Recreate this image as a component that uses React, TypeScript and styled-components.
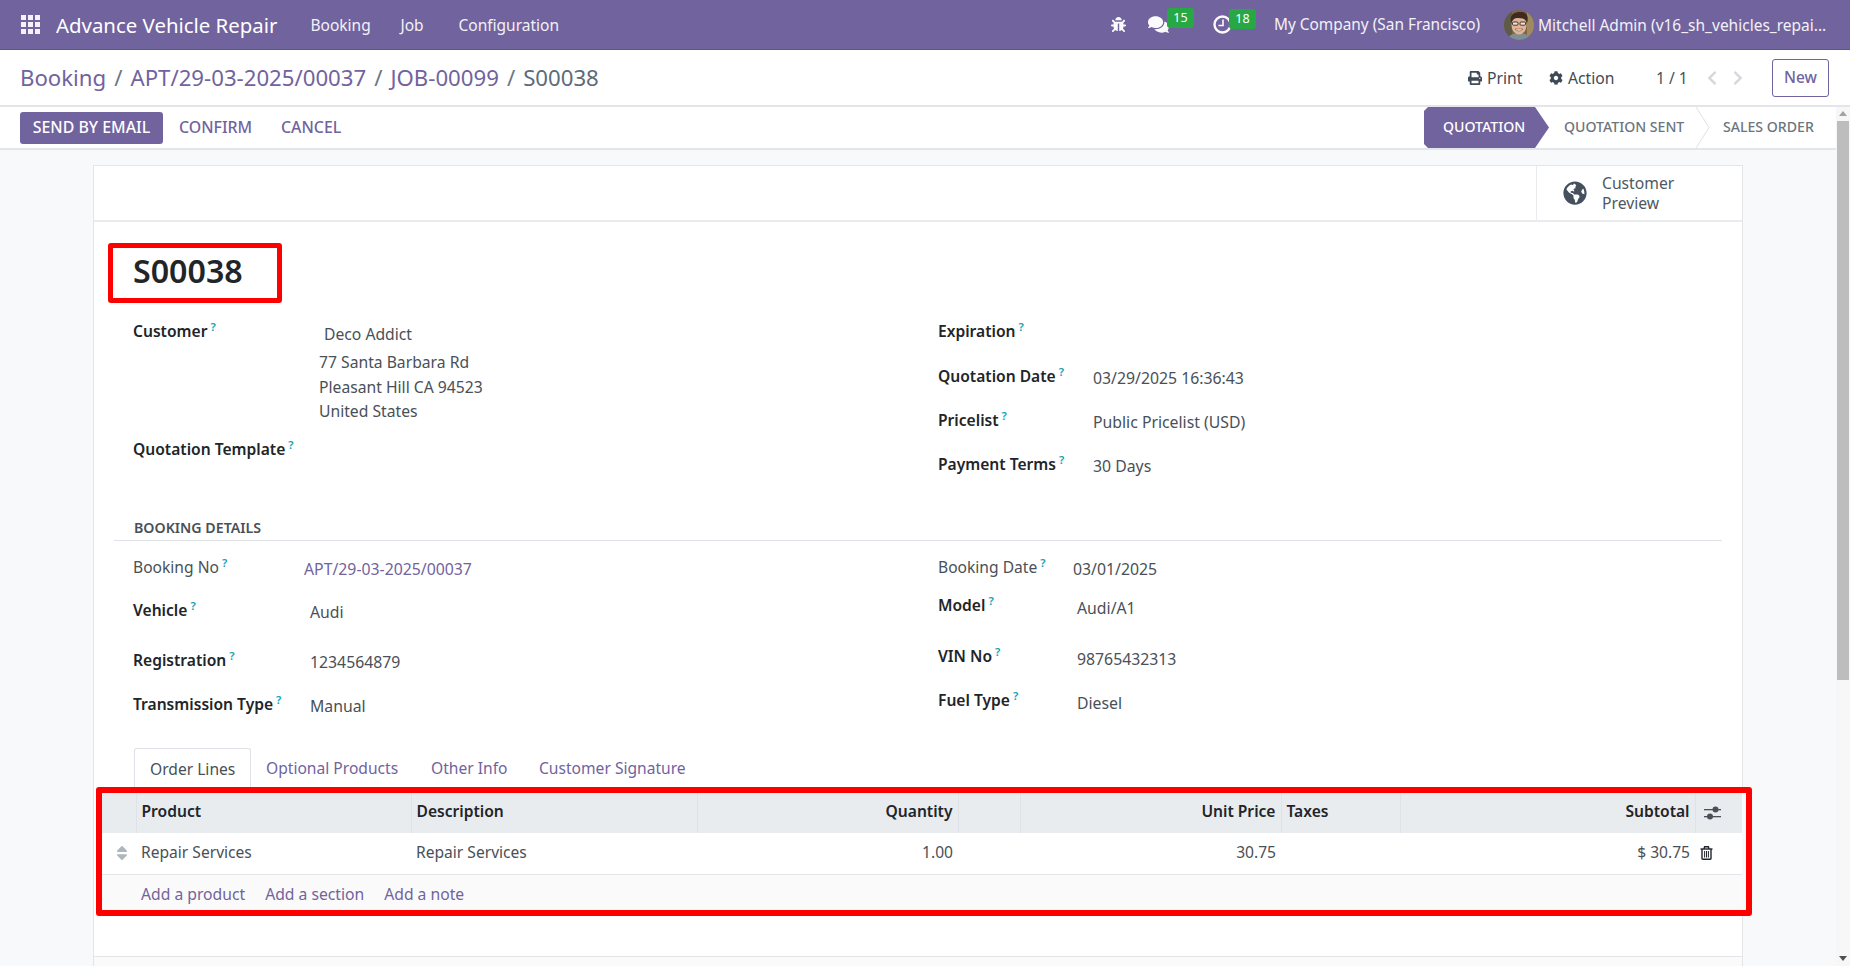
import styled, { createGlobalStyle } from "styled-components";
import {
  FaBug, FaComments, FaPrint, FaCog, FaChevronLeft, FaChevronRight,
  FaGlobeAmericas, FaSort,
} from "react-icons/fa";

const PURPLE = "#71639e";
const FONT = `"Noto Sans", "Open Sans", sans-serif`;

const GlobalStyle = createGlobalStyle`
  html, body { margin: 0; padding: 0; height: 100%; overflow: hidden; }
  body { font-family: ${FONT}; font-size: 15.6px; color: #495057; background: #fff; }
  * { box-sizing: border-box; }
`;

const Page = styled.div`
  width: 1850px; height: 966px;
  display: flex; flex-direction: column;
  overflow: hidden;
`;

/* top bar */
const Navbar = styled.header`
  height: 50px; flex: none;
  background: ${PURPLE};
  border-bottom: 1px solid #5f5387;
  display: flex; align-items: center;
  color: #fff;
  padding-left: 21px;
`;
const Brand = styled.span`
  font-size: 20.4px;
  margin-left: 16px;
  margin-right: 33px;
`;
const NavItem = styled.span<{ $w: number }>`
  font-size: 15.5px;
  width: ${(p) => p.$w}px;
  color: #f3f1f7;
`;
const NavRight = styled.div`
  margin-left: auto;
  display: flex; align-items: center;
  height: 100%;
  padding-right: 13px;
`;
const IconSlot = styled.span<{ $w: number }>`
  position: relative;
  width: ${(p) => p.$w}px;
  display: flex; align-items: center;
  color: #fbfafc;
`;
const Badge = styled.span<{ $left: number }>`
  position: absolute;
  left: ${(p) => p.$left}px; top: -6px;
  width: 27px; height: 20px;
  background: #28a745;
  border-radius: 3px;
  color: #fff;
  font-size: 12.5px; line-height: 19px;
  text-align: center;
`;
const Company = styled.span`
  font-size: 15.4px;
  width: 230px;
  color: #f3f1f7;
`;
const UserName = styled.span`
  font-size: 15.5px;
  width: 299px;
  margin-left: 4px;
  color: #f3f1f7;
  white-space: nowrap;
`;

/* breadcrumb row */
const ControlPanel = styled.div`
  height: 57px; flex: none;
  background: #fff;
  border-bottom: 2px solid #e3e5e8;
  display: flex; align-items: center;
  padding: 0 21px 0 20px;
`;
const Crumbs = styled.div`
  font-size: 22.2px;
  display: flex; gap: 8px;
  color: #6b7785;
`;
const CrumbLink = styled.span`
  color: ${PURPLE};
`;
const CrumbLast = styled.span`
  color: #5b6b7a;
`;
const PanelRight = styled.div`
  margin-left: auto;
  display: flex; align-items: center;
`;
const PanelAction = styled.span<{ $w: number }>`
  width: ${(p) => p.$w}px;
  display: flex; align-items: center; gap: 5px;
  font-size: 15.7px;
  color: #3f4a56;
  svg { font-size: 14px; }
`;
const Pager = styled.span`
  width: 48px;
  font-size: 15.6px;
  color: #495057;
`;
const PagerArrows = styled.span`
  width: 68px;
  display: flex; gap: 10px;
  color: #d5d9dd;
  font-size: 16px;
`;
const NewButton = styled.button`
  width: 57px; height: 38px;
  background: #fff;
  border: 1px solid ${PURPLE};
  border-radius: 3px;
  color: ${PURPLE};
  font: 500 15.4px ${FONT};
  padding: 0;
`;

/* body + scrollbar */
const Main = styled.div`
  flex: 1; min-height: 0;
  display: flex;
`;
const Content = styled.div`
  flex: 1; min-width: 0;
  background: #f8f9fa;
  display: flex; flex-direction: column;
`;
const Scrollbar = styled.div`
  width: 14px; flex: none;
  background: #f7f7f7;
  display: flex; flex-direction: column; align-items: center;
`;
const ScrollArrow = styled.span<{ $up?: boolean }>`
  width: 0; height: 0;
  margin: ${(p) => (p.$up ? "4px 0 5px" : "auto 0 5px")};
  border-left: 4px solid transparent;
  border-right: 4px solid transparent;
  ${(p) => (p.$up ? "border-bottom: 5px solid #a3a3a3;" : "border-top: 5px solid #505050;")}
`;
const ScrollThumb = styled.div`
  width: 12px; height: 559px;
  background: #bdbdbd;
`;

/* status row */
const ActionRow = styled.div`
  height: 43px; flex: none;
  background: #fff;
  border-bottom: 2px solid #e3e5e8;
  display: flex; align-items: center;
  padding: 0 21px 0 20px;
`;
const PrimaryButton = styled.button`
  width: 143px; height: 32px;
  background: ${PURPLE};
  border: none;
  border-radius: 3px;
  color: #fff;
  font: 500 15.9px ${FONT};
  padding: 0 0 2px;
  margin-right: 16px;
`;
const PlainButton = styled.span<{ $w: number }>`
  width: ${(p) => p.$w}px;
  font-size: 15.9px; font-weight: 500;
  color: ${PURPLE};
  padding-bottom: 1px;
`;
const StatusBar = styled.div`
  margin-left: auto;
  margin-right: -21px;
  height: 41px;
  display: flex; align-items: center;
`;
const StatusActive = styled.span`
  width: 125px; height: 41px;
  background: ${PURPLE};
  color: #fff;
  font-size: 14.1px; font-weight: 500;
  display: flex; align-items: center;
  padding: 0 0 2px 19px;
  clip-path: polygon(4px 0, 111px 0, 125px 50%, 111px 100%, 4px 100%, 0 90%, 0 10%);
`;
const StatusStep = styled.span<{ $w: number; $pad: number }>`
  width: ${(p) => p.$w}px;
  padding: 0 0 2px ${(p) => p.$pad}px;
  font-size: 14.1px; font-weight: 500;
  color: #6c757d;
  white-space: nowrap;
`;
const StatusSep = styled.svg`
  width: 14px; height: 41px;
  flex: none;
  margin-right: 13px;
`;

/* sheet */
const SheetArea = styled.div`
  padding: 15px 93px 0;
  flex: 1; min-height: 0;
`;
const Sheet = styled.div`
  height: 805px;
  background: #fff;
  border: 1px solid #e3e5e8;
  border-bottom: none;
  display: flex; flex-direction: column;
`;
const ButtonBox = styled.div`
  height: 56px; flex: none;
  border-bottom: 2px solid #e9ebee;
  display: flex; justify-content: flex-end;
`;
const StatButton = styled.div`
  width: 206px;
  border-left: 1px solid #e9ebee;
  display: flex; align-items: center;
  padding-left: 26px;
  svg { font-size: 24px; flex: none; color: #45505c; }
`;
const StatLabel = styled.span`
  margin-left: 15px;
  font-size: 15.7px; line-height: 20px;
  color: #4e5964;
`;
const TitleBox = styled.div`
  width: 174px; height: 60px;
  margin: 21px 0 0 14px;
  border: 5px solid #ff0000;
  border-radius: 3px;
  padding: 0 0 5px 20px;
  display: flex; align-items: center;
`;
const Title = styled.h1`
  margin: 0;
  font-size: 32.2px; font-weight: 600;
  color: #212529;
`;
const Columns = styled.div<{ $h: number; $mt: number }>`
  height: ${(p) => p.$h}px;
  margin-top: ${(p) => p.$mt}px;
  padding-left: 39px;
  display: grid;
  grid-template-columns: 805px 1fr;
`;
const Column = styled.div`
  display: flex; flex-direction: column;
`;
const Field = styled.div<{ $h: number; $label: number }>`
  height: ${(p) => p.$h}px;
  display: grid;
  grid-template-columns: ${(p) => p.$label}px 1fr;
  align-items: start;
`;
const Label = styled.span<{ $plain?: boolean }>`
  line-height: 24px;
  font-size: 15.6px;
  font-weight: ${(p) => (p.$plain ? 400 : 600)};
  color: ${(p) => (p.$plain ? "#495057" : "#212529")};
  white-space: nowrap;
`;
const Help = styled.sup`
  margin-left: 3px;
  font-size: 11.5px; font-weight: 600;
  color: #17a2b8;
  line-height: 0;
`;
const Value = styled.span<{ $link?: boolean; $top: number }>`
  padding-top: ${(p) => p.$top}px;
  line-height: 24px;
  font-size: 15.8px;
  color: ${(p) => (p.$link ? PURPLE : "#495057")};
  white-space: nowrap;
`;
const Address = styled.div`
  padding-top: 3px;
  margin-left: -5px;
  font-size: 15.7px;
  color: #495057;
`;
const AddressName = styled.div`
  margin: 0 0 4px 5px;
  line-height: 24px;
`;
const AddressLine = styled.div`
  height: 24.5px; line-height: 24px;
`;
const SectionTitle = styled.div`
  margin: 0 20px;
  height: 24px;
  padding: 1px 0 0 20px;
  border-bottom: 1px solid #dee2e6;
  font-size: 14.2px; font-weight: 600; line-height: 20px;
  color: #495057;
  flex: none;
`;
const Tabs = styled.div`
  margin-left: 40px;
  height: 39px; flex: none;
  display: flex;
`;
const Tab = styled.span<{ $active?: boolean; $w: number }>`
  width: ${(p) => p.$w}px;
  padding-left: 15px;
  font-size: 15.6px; line-height: 40px;
  color: ${(p) => (p.$active ? "#495057" : PURPLE)};
  white-space: nowrap;
  ${(p) => p.$active && "border: 1px solid #dee2e6; border-bottom: none; border-radius: 3px 3px 0 0; background: #fff;"}
`;
const TableBox = styled.div`
  width: 1656px; height: 129px;
  margin-left: 2px;
  border: 6px solid #ff0000;
  border-radius: 3px;
  background: #f8f9fa;
  flex: none;
`;
const Table = styled.table`
  width: 1640px;
  border-collapse: collapse;
  table-layout: fixed;
  font-size: 15.6px;
`;
const Th = styled.th<{ $right?: boolean }>`
  height: 40px;
  padding: 0 5px 5px;
  background: #e9ecef;
  border-left: 1px solid #dfe2e6;
  color: #212529;
  font-weight: 600;
  text-align: ${(p) => (p.$right ? "right" : "left")};
  white-space: nowrap;
  &:first-child { border-left: none; }
`;
const SlidersTh = styled(Th)`
  padding: 0 0 0 8px;
  svg { display: block; }
`;
const Td = styled.td<{ $right?: boolean }>`
  height: 41px;
  padding: 0 5px 2px;
  background: #fff;
  border-bottom: 1px solid #e3e5e8;
  color: #495057;
  text-align: ${(p) => (p.$right ? "right" : "left")};
  white-space: nowrap;
`;
const HandleCell = styled(Td)`
  padding: 0 0 0 11px;
  svg { display: block; color: #adb5bd; font-size: 18px; }
`;
const TrashCell = styled(Td)`
  padding: 0 0 0 5px;
  svg { display: block; }
`;
const TableFooter = styled.div`
  height: 35px;
  width: 1640px;
  background: #fafafa;
  padding: 4px 0 0 39px;
  display: flex; align-items: center; gap: 20px;
  font-size: 15.7px;
  color: ${PURPLE};
`;
const ChatterTop = styled.div`
  flex: 1;
  background: #fafafa;
  margin-top: 40px;
  border-top: 1px solid #e3e5e8;
`;

const GridIcon = () => (
  <svg width="19" height="19" viewBox="0 0 19 19" fill="#f4f2f8">
    {[0, 7, 14].flatMap((y) =>
      [0, 7, 14].map((x) => <rect key={`${x}-${y}`} x={x} y={y} width="5" height="5" />)
    )}
  </svg>
);

const ClockIcon = () => (
  <svg width="19" height="19" viewBox="0 0 19 19" fill="none" stroke="#fbfafc">
    <circle cx="9.5" cy="9.5" r="8" strokeWidth="2.4" />
    <path d="M10 4.5 V10.5 H5.5" strokeWidth="1.6" />
  </svg>
);

const SlidersIcon = () => (
  <svg width="18" height="14" viewBox="0 0 18 14" fill="#495057">
    <rect x="0" y="3" width="17" height="1.3" />
    <rect x="0" y="10" width="17" height="1.3" />
    <circle cx="11.5" cy="3.6" r="3" />
    <circle cx="6" cy="10.6" r="3" />
  </svg>
);

const TrashIcon = () => (
  <svg width="13" height="14" viewBox="0 0 13 14" fill="none" stroke="#212529" strokeWidth="1.4">
    <path d="M0.5 3 H12.5" />
    <path d="M4 3 L4.6 0.8 H8.4 L9 3" />
    <path d="M2 3 V12.6 Q2 13.3 2.8 13.3 H10.2 Q11 13.3 11 12.6 V3" />
    <path d="M4.6 5 V11.5 M6.5 5 V11.5 M8.4 5 V11.5" strokeWidth="1" />
  </svg>
);

const Avatar = () => (
  <svg width="30" height="30" viewBox="0 0 30 30">
    <clipPath id="av"><circle cx="15" cy="15" r="15" /></clipPath>
    <g clipPath="url(#av)">
      <rect width="30" height="30" fill="#7d6745" />
      <rect x="0" y="0" width="8" height="30" fill="#5e5a48" />
      <rect x="23" y="0" width="7" height="30" fill="#a08a5e" />
      <path d="M2 30 Q6 23 15 23 Q24 23 28 30Z" fill="#7f8f92" />
      <ellipse cx="15" cy="15" rx="7.5" ry="9.5" fill="#e0b499" />
      <path d="M7 13 C5 4 11 2 17 2 C23 2 25 7 23 13 C22 9 19 8 14 8 C11 8 9 9 7 13Z" fill="#3d2a20" />
      <rect x="8.5" y="12" width="5.5" height="3.2" rx="1" fill="#f2e3d8" stroke="#33241b" strokeWidth="0.9" />
      <rect x="16" y="12" width="5.5" height="3.2" rx="1" fill="#f2e3d8" stroke="#33241b" strokeWidth="0.9" />
      <path d="M11 19 Q15 23 19 19Z" fill="#fdf7f2" stroke="#8a4d36" strokeWidth="0.6" />
    </g>
  </svg>
);

const HelpMark = () => <Help>?</Help>;

interface FieldRowProps {
  label: string;
  value?: string;
  h: number;
  w: number;
  top?: number;
  plain?: boolean;
  link?: boolean;
}

const FieldRow = ({ label, value, h, w, top = 2, plain, link }: FieldRowProps) => (
  <Field $h={h} $label={w}>
    <Label $plain={plain}>{label}<HelpMark /></Label>
    {value && <Value $link={link} $top={top}>{value}</Value>}
  </Field>
);

export default function App() {
  return (
    <Page>
      <GlobalStyle />
      <Navbar>
        <GridIcon />
        <Brand>Advance Vehicle Repair</Brand>
        <NavItem $w={90}>Booking</NavItem>
        <NavItem $w={58}>Job</NavItem>
        <NavItem $w={120}>Configuration</NavItem>
        <NavRight>
          <IconSlot $w={37}><FaBug size={15} /></IconSlot>
          <IconSlot $w={65}><FaComments size={21} /><Badge $left={19}>15</Badge></IconSlot>
          <IconSlot $w={61}><ClockIcon /><Badge $left={16}>18</Badge></IconSlot>
          <Company>My Company (San Francisco)</Company>
          <Avatar />
          <UserName>Mitchell Admin (v16_sh_vehicles_repai...</UserName>
        </NavRight>
      </Navbar>

      <ControlPanel>
        <Crumbs>
          <CrumbLink>Booking</CrumbLink>/
          <CrumbLink>APT/29-03-2025/00037</CrumbLink>/
          <CrumbLink>JOB-00099</CrumbLink>/
          <CrumbLast>S00038</CrumbLast>
        </Crumbs>
        <PanelRight>
          <PanelAction $w={81}><FaPrint />Print</PanelAction>
          <PanelAction $w={107}><FaCog />Action</PanelAction>
          <Pager>1 / 1</Pager>
          <PagerArrows><FaChevronLeft /><FaChevronRight /></PagerArrows>
          <NewButton>New</NewButton>
        </PanelRight>
      </ControlPanel>

      <Main>
        <Content>
          <ActionRow>
            <PrimaryButton>SEND BY EMAIL</PrimaryButton>
            <PlainButton $w={102}>CONFIRM</PlainButton>
            <PlainButton $w={70}>CANCEL</PlainButton>
            <StatusBar>
              <StatusActive>QUOTATION</StatusActive>
              <StatusStep $w={147} $pad={15}>QUOTATION SENT</StatusStep>
              <StatusSep viewBox="0 0 14 41">
                <path d="M0 0 L13 20.5 L0 41" fill="none" stroke="#dee2e6" />
              </StatusSep>
              <StatusStep $w={113} $pad={0}>SALES ORDER</StatusStep>
            </StatusBar>
          </ActionRow>

          <SheetArea>
            <Sheet>
              <ButtonBox>
                <StatButton>
                  <FaGlobeAmericas />
                  <StatLabel>Customer<br />Preview</StatLabel>
                </StatButton>
              </ButtonBox>

              <TitleBox><Title>S00038</Title></TitleBox>

              <Columns $h={198} $mt={16}>
                <Column>
                  <Field $h={118} $label={191}>
                    <Label>Customer<HelpMark /></Label>
                    <Address>
                      <AddressName>Deco Addict</AddressName>
                      <AddressLine>77 Santa Barbara Rd</AddressLine>
                      <AddressLine>Pleasant Hill CA 94523</AddressLine>
                      <AddressLine>United States</AddressLine>
                    </Address>
                  </Field>
                  <FieldRow label="Quotation Template" h={40} w={191} />
                </Column>
                <Column>
                  <FieldRow label="Expiration" h={45} w={155} />
                  <FieldRow label="Quotation Date" value="03/29/2025 16:36:43" h={44} w={155} />
                  <FieldRow label="Pricelist" value="Public Pricelist (USD)" h={44} w={155} />
                  <FieldRow label="Payment Terms" value="30 Days" h={44} w={155} />
                </Column>
              </Columns>

              <SectionTitle>BOOKING DETAILS</SectionTitle>

              <Columns $h={193} $mt={14}>
                <Column>
                  <FieldRow label="Booking No" value="APT/29-03-2025/00037" h={43} w={171} plain link />
                  <FieldRow label="Vehicle" value="Audi" h={50} w={177} />
                  <FieldRow label="Registration" value="1234564879" h={44} w={177} />
                  <FieldRow label="Transmission Type" value="Manual" h={44} w={177} />
                </Column>
                <Column>
                  <FieldRow label="Booking Date" value="03/01/2025" h={38} w={135} plain />
                  <FieldRow label="Model" value="Audi/A1" h={51} w={139} top={3} />
                  <FieldRow label="VIN No" value="98765432313" h={44} w={139} top={3} />
                  <FieldRow label="Fuel Type" value="Diesel" h={44} w={139} top={3} />
                </Column>
              </Columns>

              <Tabs>
                <Tab $active $w={117}>Order Lines</Tab>
                <Tab $w={165}>Optional Products</Tab>
                <Tab $w={108}>Other Info</Tab>
                <Tab $w={190}>Customer Signature</Tab>
              </Tabs>

              <TableBox>
                <Table>
                  <colgroup>
                    {[34, 275, 286, 261, 62, 261, 119, 295, 47].map((w, i) => (
                      <col key={i} width={w} />
                    ))}
                  </colgroup>
                  <thead>
                    <tr>
                      <Th />
                      <Th>Product</Th>
                      <Th>Description</Th>
                      <Th $right>Quantity</Th>
                      <Th />
                      <Th $right>Unit Price</Th>
                      <Th>Taxes</Th>
                      <Th $right>Subtotal</Th>
                      <SlidersTh><SlidersIcon /></SlidersTh>
                    </tr>
                  </thead>
                  <tbody>
                    <tr>
                      <HandleCell><FaSort /></HandleCell>
                      <Td>Repair Services</Td>
                      <Td>Repair Services</Td>
                      <Td $right>1.00</Td>
                      <Td />
                      <Td $right>30.75</Td>
                      <Td />
                      <Td $right>$ 30.75</Td>
                      <TrashCell><TrashIcon /></TrashCell>
                    </tr>
                  </tbody>
                </Table>
                <TableFooter>
                  <span>Add a product</span>
                  <span>Add a section</span>
                  <span>Add a note</span>
                </TableFooter>
              </TableBox>

              <ChatterTop />
            </Sheet>
          </SheetArea>
        </Content>
        <Scrollbar>
          <ScrollArrow $up />
          <ScrollThumb />
          <ScrollArrow />
        </Scrollbar>
      </Main>
    </Page>
  );
}
